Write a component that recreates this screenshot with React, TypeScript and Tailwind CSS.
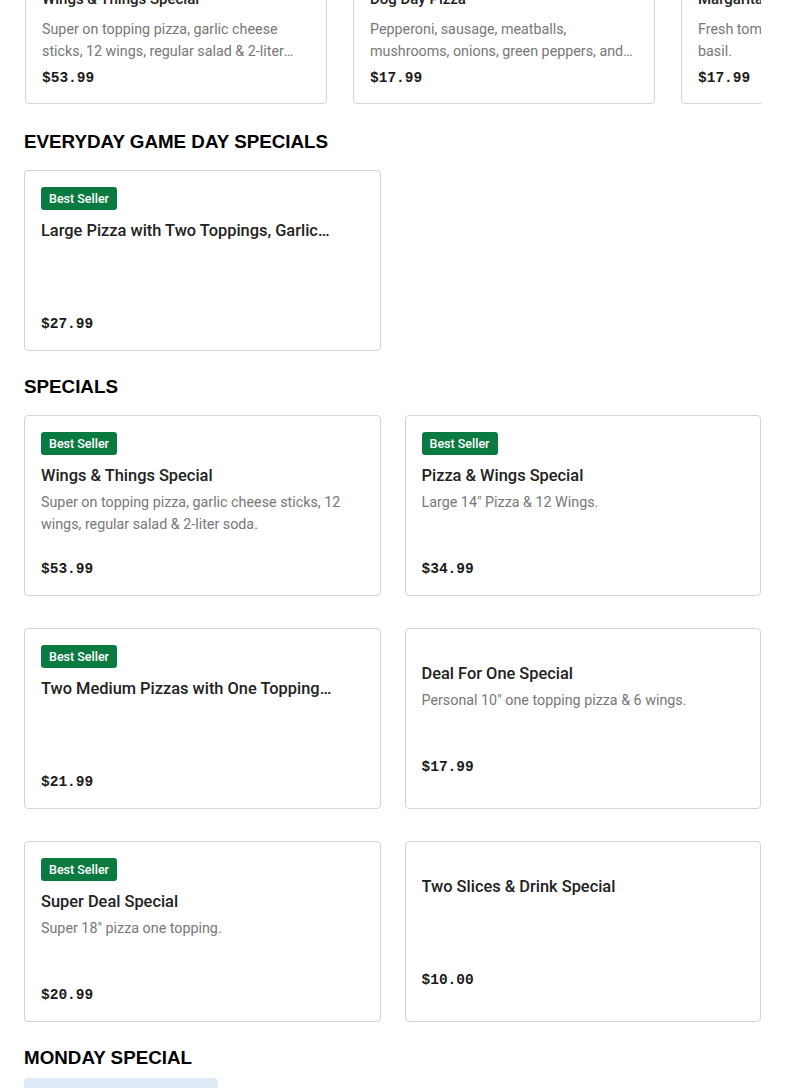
import React from 'react';

type Item = {
  name: string;
  description?: string;
  price: string;
  bestSeller?: boolean;
};

const carousel: Item[] = [
  { name: 'Wings & Things Special', description: 'Super on topping pizza, garlic cheese sticks, 12 wings, regular salad & 2-liter soda.', price: '$53.99' },
  { name: 'Dog Day Pizza', description: 'Pepperoni, sausage, meatballs, mushrooms, onions, green peppers, and black olives.', price: '$17.99' },
  { name: 'Margarita Pizza', description: 'Fresh tomatoes, sliced mozzarella and basil.', price: '$17.99' },
];

const everyday: Item[] = [
  { name: 'Large Pizza with Two Toppings, Garlic Bread & 2-Liter Soda', price: '$27.99', bestSeller: true },
];

const specials: Item[] = [
  { name: 'Wings & Things Special', description: 'Super on topping pizza, garlic cheese sticks, 12 wings, regular salad & 2-liter soda.', price: '$53.99', bestSeller: true },
  { name: 'Pizza & Wings Special', description: 'Large 14" Pizza & 12 Wings.', price: '$34.99', bestSeller: true },
  { name: 'Two Medium Pizzas with One Topping Special', price: '$21.99', bestSeller: true },
  { name: 'Deal For One Special', description: 'Personal 10" one topping pizza & 6 wings.', price: '$17.99' },
  { name: 'Super Deal Special', description: 'Super 18" pizza one topping.', price: '$20.99', bestSeller: true },
  { name: 'Two Slices & Drink Special', price: '$10.00' },
];

const sans = { fontFamily: 'Roboto, "Liberation Sans", sans-serif' };

function Heading({ children }: { children: React.ReactNode }) {
  return (
    <h2 className="text-[18.8px] leading-6 font-black uppercase text-black font-['Liberation_Sans',Arial,sans-serif]">
      {children}
    </h2>
  );
}

function Price({ value }: { value: string }) {
  return (
    <p className="font-['Liberation_Mono',monospace] text-[14.5px] leading-5 font-bold text-[#1a1a1a]">{value}</p>
  );
}

function CarouselCard({ item }: { item: Item }) {
  return (
    <div className="w-[302px] shrink-0 rounded border border-[#d4d4d4] px-4 pt-4 pb-[15px]">
      <h3 className="text-[15px] leading-[22px] font-medium text-[#222] truncate">{item.name}</h3>
      <p className="mt-2 text-[14.3px] leading-[22px] text-[#777] line-clamp-2">{item.description}</p>
      <div className="mt-[6px]">
        <Price value={item.price} />
      </div>
    </div>
  );
}

function MenuCard({ item }: { item: Item }) {
  return (
    <div className="h-[181px] rounded border border-[#d4d4d4] px-4 flex flex-col justify-center">
      {item.bestSeller && (
        <span className="self-start h-[23px] px-2 rounded-[3px] bg-[#0b7a41] text-white text-[12.5px] font-medium leading-[23px]">
          Best Seller
        </span>
      )}
      <div className={item.bestSeller ? 'mt-2' : ''}>
        <h3 className="text-[16.4px] leading-[26px] font-medium text-[#222] line-clamp-1">{item.name}</h3>
        <p className="mt-0.5 min-h-[44px] text-[14.3px] leading-[22px] text-[#777] line-clamp-2">{item.description}</p>
      </div>
      <div className="mt-6">
        <Price value={item.price} />
      </div>
    </div>
  );
}

export default function App() {
  return (
    <div className="w-[785px] h-[1088px] overflow-hidden bg-white" style={sans}>
      <div className="px-6 -mt-[29px]">
        <div className="flex gap-[26px] overflow-hidden pl-px">
          {carousel.map(item => (
            <CarouselCard key={item.name} item={item} />
          ))}
        </div>

        <div className="mt-[26px] mb-4">
          <Heading>Everyday Game Day Specials</Heading>
        </div>
        <div className="grid grid-cols-2 gap-x-6 gap-y-8">
          {everyday.map(item => (
            <MenuCard key={item.name} item={item} />
          ))}
        </div>

        <div className="mt-6 mb-4">
          <Heading>Specials</Heading>
        </div>
        <div className="grid grid-cols-2 gap-x-6 gap-y-8">
          {specials.map(item => (
            <MenuCard key={item.name} item={item} />
          ))}
        </div>

        <div className="mt-6 mb-2">
          <Heading>Monday Special</Heading>
        </div>
        <div className="w-[194px] h-[120px] rounded-t bg-[#dfeaf7]"></div>
      </div>
    </div>
  );
}
